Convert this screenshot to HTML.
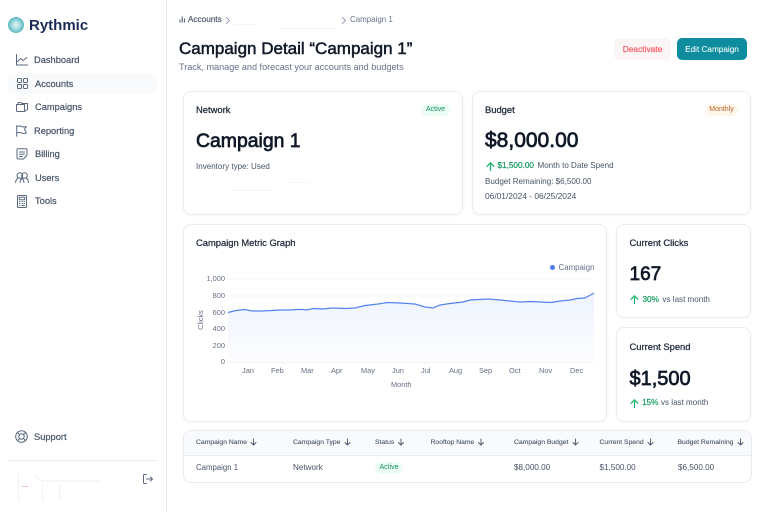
<!DOCTYPE html>
<html><head><meta charset="utf-8">
<style>
*{box-sizing:border-box}
html,body{margin:0;padding:0;background:#fff}
body{width:768px;height:512px;position:relative;overflow:hidden;font-family:"Liberation Sans",sans-serif;color:#101828;filter:blur(.3px)}
.t{position:absolute;white-space:nowrap;line-height:14px}
.card{position:absolute;background:#fff;border:1px solid #eaecf0;border-radius:8px;box-shadow:0 1px 2px rgba(16,24,40,.04)}
.nav{font-size:9.3px;color:#475467;-webkit-text-stroke:.2px #475467}
.h{font-size:9.4px;color:#1d2939;-webkit-text-stroke:.25px #1d2939}
.big{font-weight:normal;color:#101828;line-height:26px;-webkit-text-stroke:.7px #101828}
.s{font-size:8.05px;color:#475467}
.g{font-size:8.2px;color:#079455;-webkit-text-stroke:.15px #079455}
.th{font-size:6.8px;color:#475467;-webkit-text-stroke:.1px #475467}
.td{font-size:8.15px;color:#475467}
.ax{font-size:7.4px;color:#667085}
.badge{position:absolute;border-radius:8px;font-size:7px;text-align:center;line-height:12px;height:12px}
svg{position:absolute;overflow:visible}
.ic{fill:none;stroke:#5b6880;stroke-width:1;stroke-linecap:round;stroke-linejoin:round}
</style></head><body>
<div style="position:absolute;left:166px;top:0;width:1px;height:512px;background:#eaecf0"></div>

<div style="position:absolute;left:7.5px;top:17px;width:16px;height:16px;border-radius:50%;background:radial-gradient(circle at 50% 50%,#e4f5f6 0%,#a6dde0 35%,#4fb4bb 75%,#3aa5ae 100%)"></div>
<div class="t" style="left:29px;top:17px;font-size:15px;line-height:18px;font-weight:bold;color:#1c2a5a">Rythmic</div>

<div style="position:absolute;left:8px;top:73px;width:149px;height:21px;background:#f9fafb;border-radius:5px"></div>

<svg class="ic" style="left:16px;top:54px" width="12" height="12" viewBox="0 0 12 12"><path d="M.5.5V11H11.5M1.5 7.5L4.5 4.5L7 6.5L11 3.5"/></svg>
<svg class="ic" style="left:17px;top:78px" width="11" height="11" viewBox="0 0 11 11"><rect x=".5" y=".5" width="4" height="4" rx=".7"/><rect x="6.5" y=".5" width="4" height="4" rx=".7"/><rect x=".5" y="6.5" width="4" height="4" rx=".7"/><rect x="6.5" y="6.5" width="4" height="4" rx=".7"/></svg>
<svg class="ic" style="left:16px;top:101px" width="12" height="11" viewBox="0 0 12 11"><path d="M.5 3.5H8.5V10.5H1.5Q.5 10.5.5 9.5ZM2 3.5V1.5H5L6 2.5H11.5V8.5L8.5 10.5"/></svg>
<svg class="ic" style="left:16px;top:125px" width="11" height="12" viewBox="0 0 11 12"><path d="M.7.7V11.3M.7 1.5Q3 .5 5.5 1.5T10.3 1.5L8.5 4.5L10.3 8Q8 9 5.5 8T.7 8"/></svg>
<svg class="ic" style="left:16px;top:148px" width="12" height="12" viewBox="0 0 12 12"><path d="M1.7.8H10.3Q11 .8 11 1.5V7L7.5 11H1.7Q1 11 1 10.3V1.5Q1 .8 1.7.8ZM3.5 4H8.5M3.5 6.3H8.5M3.5 8.5H6.5"/></svg>
<svg class="ic" style="left:15px;top:172px" width="14" height="11" viewBox="0 0 14 11"><circle cx="4.8" cy="3.5" r="2.8"/><circle cx="9.5" cy="3.5" r="2.8"/><path d="M.5 10.5Q1 7 3.3 6M6.3 6Q8.5 7 9 10.5M5 10.5Q5.5 7 8 6M11 6Q13 7 13.5 10.5"/></svg>
<svg class="ic" style="left:17px;top:195px" width="10" height="13" viewBox="0 0 10 13"><rect x=".5" y=".5" width="9" height="12" rx=".8"/><rect x="2.3" y="2.3" width="5.4" height="2.4"/><path d="M2.5 6.5H3M5 6.5H5.5M7 6.5H7.5M2.5 8.5H3M5 8.5H5.5M7 8.5H7.5M2.5 10.5H3M5 10.5H7.5"/></svg>
<svg class="ic" style="left:15px;top:430px" width="13" height="13" viewBox="0 0 13 13"><circle cx="6.5" cy="6.5" r="5.8"/><circle cx="6.5" cy="6.5" r="2.7"/><path d="M2.4 2.4L4.6 4.6M10.6 2.4L8.4 4.6M2.4 10.6L4.6 8.4M10.6 10.6L8.4 8.4"/></svg>

<div class="t nav" style="left:34px;top:53px">Dashboard</div>
<div class="t nav" style="left:35px;top:77px">Accounts</div>
<div class="t nav" style="left:35px;top:100px">Campaigns</div>
<div class="t nav" style="left:34px;top:124px">Reporting</div>
<div class="t nav" style="left:35px;top:147px">Billing</div>
<div class="t nav" style="left:35px;top:171px">Users</div>
<div class="t nav" style="left:35px;top:194px">Tools</div>
<div class="t nav" style="left:34px;top:430px">Support</div>

<div style="position:absolute;left:8px;top:460px;width:149px;height:1px;background:#eaecf0"></div>
<svg width="168" height="52" style="left:0;top:460px" fill="none" stroke="#f0f1f4" stroke-width="1"><path d="M18.5 11V41M42.5 25V41M59.5 25V41M35.5 13Q35.5 21 45 21H100"/><path d="M22 26.5H28" stroke="#e8c4c4"/></svg>
<svg class="ic" style="left:143px;top:474px" width="10" height="10" viewBox="0 0 10 10"><path d="M3.5.5H1.2Q.5.5.5 1.2V8.8Q.5 9.5 1.2 9.5H3.5M3.5 5H9.5M7.5 3L9.5 5L7.5 7"/></svg>

<svg style="left:179px;top:16px" width="7" height="7" viewBox="0 0 7 7" fill="none" stroke="#475467" stroke-width="1"><path d="M1 3.5V6.5M3.2 .5V6.5M5.4 2.5V6.5"/></svg>
<div class="t" style="left:188px;top:13px;font-size:8.2px;color:#475467;-webkit-text-stroke:.15px #475467">Accounts</div>
<svg class="ic" style="left:226px;top:17px;stroke:#98a2b3" width="4" height="7" viewBox="0 0 4 7"><path d="M.5.5L3.5 3.5L.5 6.5"/></svg>
<div style="position:absolute;left:234px;top:24px;width:21px;height:1px;background:#f4f5f7"></div>
<div style="position:absolute;left:280px;top:28px;width:57px;height:1px;background:#f2f3f5"></div>
<svg class="ic" style="left:342px;top:17px;stroke:#98a2b3" width="4" height="7" viewBox="0 0 4 7"><path d="M.5.5L3.5 3.5L.5 6.5"/></svg>
<div class="t" style="left:350px;top:13px;font-size:7.95px;color:#667085">Campaign 1</div>

<div class="t" style="left:179px;top:38px;font-size:17px;line-height:22px;color:#101828;-webkit-text-stroke:.5px #101828">Campaign Detail “Campaign 1”</div>
<div class="t" style="left:179px;top:60px;font-size:9.1px;color:#667085">Track, manage and forecast your accounts and budgets</div>

<div style="position:absolute;left:614px;top:38px;width:57px;height:22px;background:#fbf5f5;border-radius:5px;font-size:8.4px;line-height:23px;text-align:center;color:#f9545e;-webkit-text-stroke:.15px #f9545e">Deactivate</div>
<div style="position:absolute;left:677px;top:38px;width:70px;height:22px;background:#0f8c9e;border-radius:5px;font-size:8.2px;line-height:23px;text-align:center;color:#eef9fb;-webkit-text-stroke:.1px #eef9fb">Edit Campaign</div>

<div class="card" style="left:183px;top:91px;width:280px;height:124px"></div>
<div class="t h" style="left:196px;top:103px">Network</div>
<div class="badge" style="left:421px;top:104px;width:29px;background:#ecfdf3;color:#17905a">Active</div>
<div class="t big" style="left:196px;top:128px;font-size:19.4px">Campaign 1</div>
<div class="t s" style="left:196px;top:160px">Inventory type: Used</div>
<div style="position:absolute;left:233px;top:190px;width:38px;height:1px;background:#f4f5f7"></div>
<div style="position:absolute;left:285px;top:182px;width:24px;height:1px;background:#f6f7f8"></div>

<div class="card" style="left:472px;top:91px;width:279px;height:124px"></div>
<div class="t h" style="left:485px;top:103px">Budget</div>
<div class="badge" style="left:705px;top:104px;width:33px;background:#fff6ea;color:#b5622a">Monthly</div>
<div class="t big" style="left:485px;top:128px;font-size:21px">$8,000.00</div>
<svg style="left:486px;top:162px" width="9" height="9" viewBox="0 0 9 9" fill="none" stroke="#17b26a" stroke-width="1.2" stroke-linecap="round" stroke-linejoin="round"><path d="M4.5 8.5V.8M1 4.3L4.5 .8L8 4.3"/></svg>
<div class="t g" style="left:497.5px;top:159px">$1,500.00</div>
<div class="t s" style="left:537.5px;top:159px">Month to Date Spend</div>
<div class="t s" style="left:485px;top:175px">Budget Remaining: $6,500.00</div>
<div class="t s" style="left:485px;top:189px;font-size:8.4px">06/01/2024 - 06/25/2024</div>

<div class="card" style="left:183px;top:224px;width:424px;height:198px"></div>
<div class="t h" style="left:196px;top:236px">Campaign Metric Graph</div>
<div style="position:absolute;left:550px;top:265px;width:5px;height:5px;border-radius:50%;background:#4b7bec"></div>
<div class="t ax" style="left:558.5px;top:261px;font-size:7.9px">Campaign</div>

<svg width="768" height="512" style="left:0;top:0">
<defs><linearGradient id="f" x1="0" y1="0" x2="0" y2="1"><stop offset="0" stop-color="#eef3fe"/><stop offset="1" stop-color="#fcfdff"/></linearGradient></defs>
<path d="M228 279H594M228 296H594M228 313H594M228 329H594M228 346H594M228 362.5H594" stroke="#f2f4f7" stroke-width="1" fill="none"/>
<path d="M228 312.5L236 310.5L245 309.5L252 311L262 311L272 310.5L280 310L290 310L297 309.5L303 309.5L306 310L314 308.5L322 309L333 308L345 308.5L355 308L365 305.5L378 304L388 302.5L400 303L415 304L425 307L433 308L440 305L450 303.5L463 302L470 300L488 299L500 300L510 301L520 302L530 301.5L541 302L551 302.5L560 301L570 300L577 298.5L585 298L594 293V362H228Z" fill="url(#f)"/>
<path d="M228 312.5L236 310.5L245 309.5L252 311L262 311L272 310.5L280 310L290 310L297 309.5L303 309.5L306 310L314 308.5L322 309L333 308L345 308.5L355 308L365 305.5L378 304L388 302.5L400 303L415 304L425 307L433 308L440 305L450 303.5L463 302L470 300L488 299L500 300L510 301L520 302L530 301.5L541 302L551 302.5L560 301L570 300L577 298.5L585 298L594 293" fill="none" stroke="#5583ee" stroke-width="1.2"/>
</svg>
<div class="t ax" style="right:543px;top:272px">1,000</div>
<div class="t ax" style="right:543px;top:289px">800</div>
<div class="t ax" style="right:543px;top:306px">600</div>
<div class="t ax" style="right:543px;top:322px">400</div>
<div class="t ax" style="right:543px;top:339px">200</div>
<div class="t ax" style="right:543px;top:355px">0</div>
<div class="t ax" style="left:189px;top:313px;width:24px;text-align:center;transform:rotate(-90deg)">Clicks</div>
<div class="t ax" style="left:242px;top:364px">Jan</div>
<div class="t ax" style="left:271px;top:364px">Feb</div>
<div class="t ax" style="left:301px;top:364px">Mar</div>
<div class="t ax" style="left:331px;top:364px">Apr</div>
<div class="t ax" style="left:361px;top:364px">May</div>
<div class="t ax" style="left:392px;top:364px">Jun</div>
<div class="t ax" style="left:421px;top:364px">Jul</div>
<div class="t ax" style="left:449px;top:364px">Aug</div>
<div class="t ax" style="left:479px;top:364px">Sep</div>
<div class="t ax" style="left:509px;top:364px">Oct</div>
<div class="t ax" style="left:539px;top:364px">Nov</div>
<div class="t ax" style="left:570px;top:364px">Dec</div>
<div class="t ax" style="left:391px;top:378px">Month</div>

<div class="card" style="left:616px;top:224px;width:135px;height:94px"></div>
<div class="t h" style="left:629.5px;top:236px">Current Clicks</div>
<div class="t big" style="left:629.5px;top:262px;font-size:19px">167</div>
<svg style="left:630px;top:295px" width="9" height="9" viewBox="0 0 9 9" fill="none" stroke="#17b26a" stroke-width="1.2" stroke-linecap="round" stroke-linejoin="round"><path d="M4.5 8.5V.8M1 4.3L4.5 .8L8 4.3"/></svg>
<div class="t g" style="left:642.5px;top:293px">30%</div>
<div class="t s" style="left:662.5px;top:293px">vs last month</div>

<div class="card" style="left:616px;top:327px;width:135px;height:95px"></div>
<div class="t h" style="left:629.5px;top:340px">Current Spend</div>
<div class="t big" style="left:629.5px;top:366px;font-size:20px">$1,500</div>
<svg style="left:630px;top:399px" width="9" height="9" viewBox="0 0 9 9" fill="none" stroke="#17b26a" stroke-width="1.2" stroke-linecap="round" stroke-linejoin="round"><path d="M4.5 8.5V.8M1 4.3L4.5 .8L8 4.3"/></svg>
<div class="t g" style="left:642px;top:396px">15%</div>
<div class="t s" style="left:661px;top:396px">vs last month</div>

<div style="position:absolute;left:183px;top:430px;width:569px;height:53px;border:1px solid #eaecf0;border-radius:8px;overflow:hidden;background:#fff"><div style="height:25px;background:#f9fafb;border-bottom:1px solid #eaecf0"></div></div>
<div class="t th" style="left:196px;top:436px">Campaign Name</div>
<div class="t th" style="left:293px;top:436px">Campaign Type</div>
<div class="t th" style="left:375px;top:436px">Status</div>
<div class="t th" style="left:430.5px;top:436px">Rooftop Name</div>
<div class="t th" style="left:514px;top:436px">Campaign Budget</div>
<div class="t th" style="left:599.5px;top:436px">Current Spend</div>
<div class="t th" style="left:677.5px;top:436px">Budget Remaining</div>
<svg width="768" height="512" style="left:0;top:0" fill="none" stroke="#475467" stroke-width=".9" stroke-linecap="round" stroke-linejoin="round">
<path d="M253.5 439V445M251 442.5L253.5 445L256 442.5"/>
<path d="M347.5 439V445M345 442.5L347.5 445L350 442.5"/>
<path d="M401 439V445M398.5 442.5L401 445L403.5 442.5"/>
<path d="M481 439V445M478.5 442.5L481 445L483.5 442.5"/>
<path d="M575.5 439V445M573 442.5L575.5 445L578 442.5"/>
<path d="M650.5 439V445M648 442.5L650.5 445L653 442.5"/>
<path d="M740.5 439V445M738 442.5L740.5 445L743 442.5"/>
</svg>
<div class="t td" style="left:196px;top:461px;font-size:7.8px">Campaign 1</div>
<div class="t td" style="left:293px;top:461px">Network</div>
<div class="badge" style="left:375px;top:462px;width:28px;background:#ecfdf3;color:#17905a">Active</div>
<div class="t td" style="left:514px;top:461px">$8,000.00</div>
<div class="t td" style="left:599.5px;top:461px">$1,500.00</div>
<div class="t td" style="left:678px;top:461px">$6,500.00</div>
</body></html>
